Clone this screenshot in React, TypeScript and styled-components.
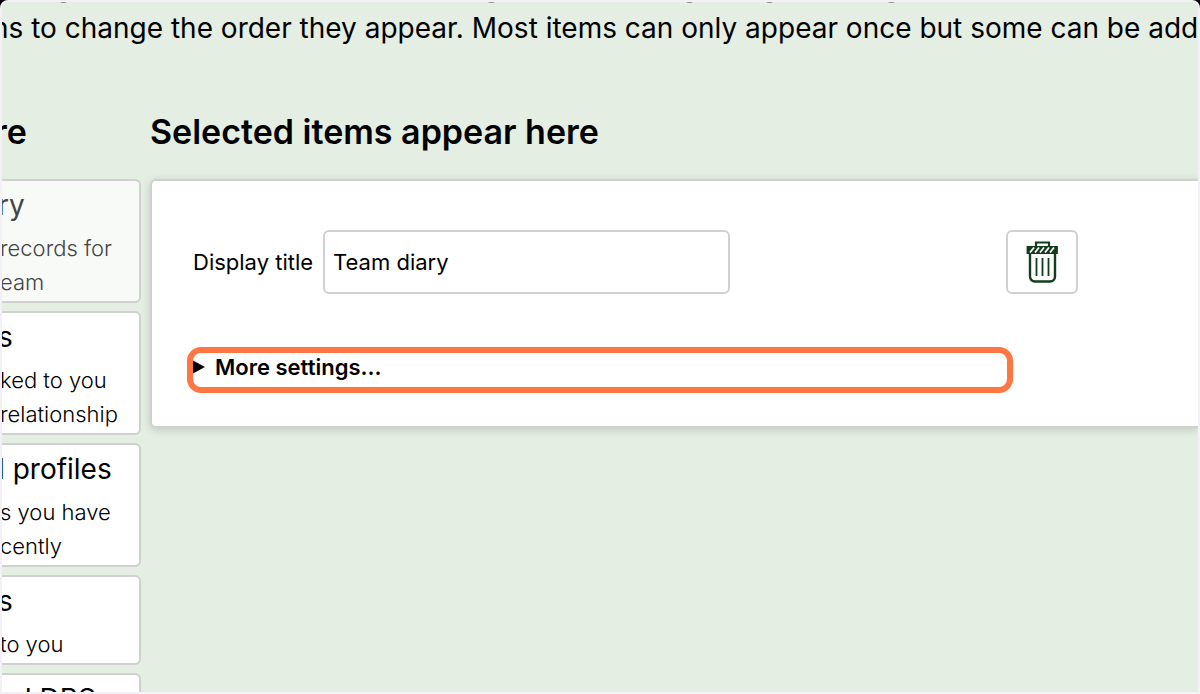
import React from "react";
import styled, { createGlobalStyle } from "styled-components";

const GlobalStyle = createGlobalStyle`
  *, *::before, *::after { box-sizing: border-box; }
  html, body { margin: 0; background: #000; }
  body { font-family: Inter, "Liberation Sans", sans-serif; color: #000; }
`;

const Frame = styled.div`
  height: 100vh;
  overflow: hidden;
  border: 2px solid #f3f1f6;
  border-radius: 8px 8px 0 0;
  background: #e4eee3;
`;

const LineTails = styled.svg`
  display: block;
  width: 100%;
  height: 2px;
`;

const Intro = styled.p`
  margin: 0 0 60px -10px;
  padding-top: 4px;
  font-size: 28px;
  line-height: 40px;
  white-space: nowrap;
`;

const Columns = styled.div`
  display: grid;
  grid-template-columns: 139px minmax(0, 1fr);
  column-gap: 9px;
`;

const Heading = styled.h2`
  margin: 0 0 24px;
  font-size: 34px;
  font-weight: 600;
  line-height: 47px;
  white-space: nowrap;
`;

const SideHeading = styled(Heading)`
  margin-left: -8px;
`;

const ItemList = styled.ul`
  display: flex;
  flex-direction: column;
  gap: 8px;
  margin: 0;
  padding: 0;
  list-style: none;
`;

const Item = styled.li<{ $used?: boolean }>`
  overflow: hidden;
  padding: 7px 0 2px;
  border: 2px solid #d0d0d0;
  border-left: 0;
  border-radius: 0 6px 6px 0;
  background: ${(p) => (p.$used ? "#f8faf7" : "#fff")};
  color: ${(p) => (p.$used ? "#444" : "#000")};
  white-space: nowrap;
`;

const ItemTitle = styled.h3`
  margin: 0 0 9px -4px;
  font-size: 28px;
  font-weight: 400;
  line-height: 34px;
`;

const ItemText = styled.p`
  margin: 0 0 0 -2px;
  font-size: 22px;
  font-weight: 300;
  line-height: 34px;
`;

const Panel = styled.section`
  padding: 49px 120px 42px 41px;
  border: 2px solid #d0d0d0;
  border-right: 0;
  border-radius: 6px 0 0 6px;
  background: #fff;
  box-shadow: 0 2px 8px rgba(0, 0, 0, 0.16);
`;

const FieldRow = styled.div`
  display: flex;
  align-items: center;
  gap: 10px;
  margin-bottom: 56px;
`;

const Label = styled.label`
  font-size: 22px;
  white-space: nowrap;
`;

const TextInput = styled.input`
  flex: 0 1 407px;
  min-width: 0;
  height: 64px;
  padding: 0 8px;
  border: 2px solid #d0d0d0;
  border-radius: 6px;
  background: #fff;
  color: #000;
  font: inherit;
  font-size: 22px;
`;

const DeleteButton = styled.button`
  display: grid;
  place-items: center;
  width: 72px;
  height: 64px;
  margin-left: auto;
  padding: 0;
  border: 2px solid #d0d0d0;
  border-radius: 6px;
  background: #fff;
`;

const Settings = styled.details`
  position: relative;
  margin-right: 71px;

  &::after {
    content: "";
    position: absolute;
    inset: -3px -6px -9px;
    border: 6px solid #ff7643;
    border-radius: 14px;
    pointer-events: none;
  }
`;

const Summary = styled.summary`
  display: flex;
  align-items: center;
  gap: 10px;
  height: 34px;
  font-size: 22px;
  font-weight: 600;
  line-height: 34px;
  cursor: pointer;
`;

const items = [
  { title: "ry", lines: ["records for", "eam"], used: true },
  { title: "s", lines: ["ked to you", "relationship"] },
  { title: "l profiles", lines: ["s you have", "cently"] },
  { title: "s", lines: ["to you"] },
  { title: "nd DBS", lines: [] },
];

function TrashIcon() {
  return (
    <svg width="32" height="42" viewBox="0 0 32 42" fill="none" stroke="#123d1b" aria-hidden="true">
      <path d="M10 5V1.500h13V5" strokeWidth="2.200" />
      <path d="M1.500 6h29.500v6H1.500z" fill="#123d1b" strokeWidth="1.800" />
      <path d="M4 11.500l4-5M9 11.500l4-5M14 11.500l4-5M19 11.500l4-5M24 11.500l4-5" stroke="#fff" strokeWidth="1.800" />
      <path d="M4 12v23.500a5 5 0 0 0 5 5h15a5 5 0 0 0 5-5V12" strokeWidth="2.400" />
      <path d="M10.500 17v18M16.500 17v18M22.500 17v18" strokeWidth="1.800" />
    </svg>
  );
}

export default function App() {
  return (
    <>
      <GlobalStyle />
      <Frame>
        <LineTails fill="#8d948c" aria-hidden="true">
          <path d="M58 0h7l-2 1h-3zM486 0h7l-2 1h-3zM684 0h7l-2 1h-3zM764 0h7l-2 1h-3zM886 0h7l-2 1h-3z" />
        </LineTails>
        <Intro>ns to change the order they appear. Most items can only appear once but some can be added</Intro>
        <Columns>
          <aside>
            <SideHeading>re</SideHeading>
            <ItemList>
              {items.map((item, i) => (
                <Item key={i} $used={item.used}>
                  <ItemTitle>{item.title}</ItemTitle>
                  {item.lines.map((line) => (
                    <ItemText key={line}>{line}</ItemText>
                  ))}
                </Item>
              ))}
            </ItemList>
          </aside>
          <main>
            <Heading>Selected items appear here</Heading>
            <Panel>
              <FieldRow>
                <Label htmlFor="display-title">Display title</Label>
                <TextInput id="display-title" type="text" defaultValue="Team diary" />
                <DeleteButton type="button" aria-label="Delete item">
                  <TrashIcon />
                </DeleteButton>
              </FieldRow>
              <Settings>
                <Summary>
                  <svg width="12" height="14" aria-hidden="true">
                    <path d="M0 0.500L12 7L0 13.500z" />
                  </svg>
                  More settings...
                </Summary>
              </Settings>
            </Panel>
          </main>
        </Columns>
      </Frame>
    </>
  );
}
